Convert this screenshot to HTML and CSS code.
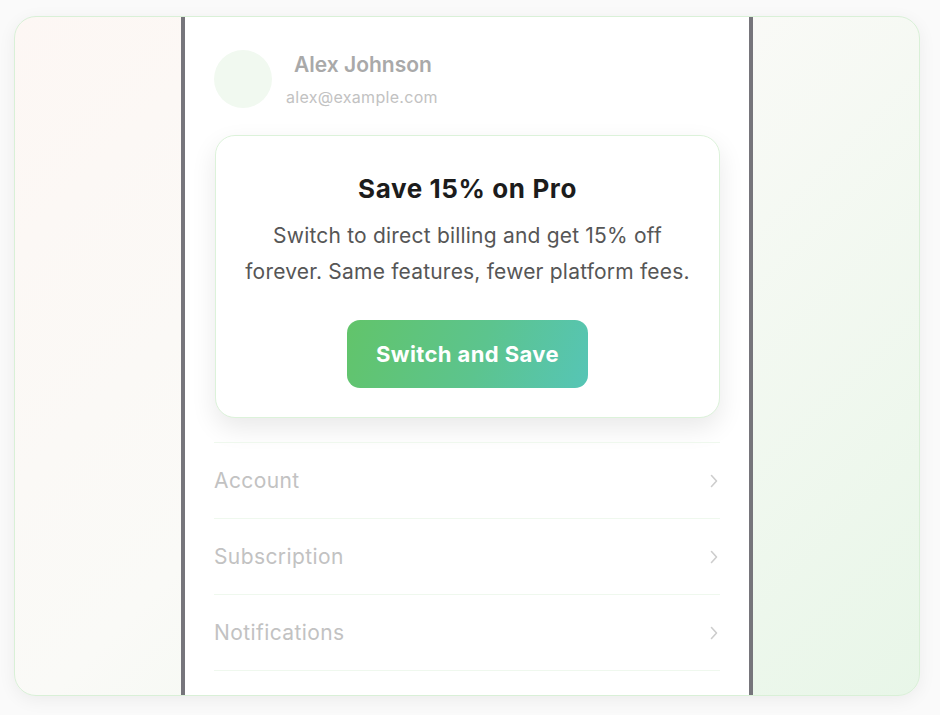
FILE: index.html
```html
<!DOCTYPE html>
<html lang="en">
<head>
<meta charset="utf-8">
<title>Save 15% on Pro</title>
<link rel="stylesheet" href="styles.css">
</head>
<body>
<div class="frame">
  <div class="phone">
    <div class="profile">
      <div class="avatar"></div>
      <div class="who">
        <div class="name">Alex Johnson</div>
        <div class="email">alex@example.com</div>
      </div>
    </div>
    <div class="promo">
      <h2 class="promo-title">Save 15% on Pro</h2>
      <p class="promo-text">Switch to direct billing and get 15% off forever. Same features, fewer platform fees.</p>
      <button class="promo-btn">Switch and Save</button>
    </div>
    <ul class="menu">
      <li class="menu-item"><span>Account</span><svg class="chev" width="8" height="14" viewBox="0 0 8 14"><path d="M1.5 1.5 L6.5 7 L1.5 12.5" fill="none" stroke="currentColor" stroke-width="1.6" stroke-linecap="round" stroke-linejoin="round"/></svg></li>
      <li class="menu-item"><span>Subscription</span><svg class="chev" width="8" height="14" viewBox="0 0 8 14"><path d="M1.5 1.5 L6.5 7 L1.5 12.5" fill="none" stroke="currentColor" stroke-width="1.6" stroke-linecap="round" stroke-linejoin="round"/></svg></li>
      <li class="menu-item"><span>Notifications</span><svg class="chev" width="8" height="14" viewBox="0 0 8 14"><path d="M1.5 1.5 L6.5 7 L1.5 12.5" fill="none" stroke="currentColor" stroke-width="1.6" stroke-linecap="round" stroke-linejoin="round"/></svg></li>
    </ul>
  </div>
</div>
</body>
</html>
```

FILE: styles.css
```css
* { box-sizing: border-box; }
html, body { height: 100%; }
body {
  margin: 0;
  background: #fafafa;
  font-family: Inter, "Liberation Sans", sans-serif;
  padding: 16px 20px 19px 14px;
}
.frame {
  width: 906px;
  height: 680px;
  border: 1px solid #d9f0d7;
  border-radius: 22px;
  background: linear-gradient(135deg, #fdf7f4 0%, #fafaf7 45%, #e8f6e8 100%);
  box-shadow: 0 4px 18px rgba(0, 0, 0, 0.06);
  overflow: hidden;
  display: flex;
  justify-content: center;
}
.phone {
  width: 572px;
  height: 760px;
  flex: none;
  background: #fff;
  border-left: 4px solid #76757b;
  border-right: 4px solid #76757b;
  padding: 33px 29px 0 29px;
}
.profile {
  display: flex;
  align-items: flex-start;
  gap: 14px;
  height: 85px;
}
.avatar {
  width: 58px;
  height: 58px;
  border-radius: 50%;
  background: #f1f9f0;
  flex: none;
}
.who { padding-top: 3px; }
.name {
  font-size: 21px;
  font-weight: 600;
  color: #a9a9a9;
  line-height: 24px;
  padding-left: 8px;
  letter-spacing: 0;
}
.email {
  margin-top: 10px;
  font-size: 16px;
  color: #c2c2c2;
  line-height: 20px;
  letter-spacing: 0.3px;
}
.promo {
  margin-left: 1px;
  width: 505px;
  height: 283px;
  border: 1px solid #dcf2da;
  border-radius: 20px;
  background: #fff;
  box-shadow: 0 10px 26px rgba(0, 0, 0, 0.09);
  text-align: center;
  padding-top: 37px;
}
.promo-title {
  margin: 0;
  font-size: 26px;
  font-weight: 700;
  color: #1c1c1c;
  line-height: 32px;
  letter-spacing: 0.6px;
}
.promo-text {
  margin: 13px auto 0;
  width: 460px;
  font-size: 21px;
  line-height: 36px;
  color: #565656;
  letter-spacing: 0.2px;
}
.promo-btn {
  margin-top: 30px;
  width: 241px;
  height: 68px;
  border: none;
  border-radius: 13px;
  background: linear-gradient(110deg, #62c46a 0%, #5cc48e 55%, #56c5b6 100%);
  color: #fff;
  font-family: inherit;
  font-size: 22px;
  font-weight: 700;
  letter-spacing: 0.4px;
}
.menu {
  list-style: none;
  margin: 24px 0 0;
  padding: 0;
  border-top: 1px solid #eff8ee;
}
.menu-item {
  height: 76px;
  display: flex;
  align-items: center;
  justify-content: space-between;
  border-bottom: 1px solid #eff8ee;
  font-size: 21px;
  color: #c2c2c2;
  letter-spacing: 0.4px;
  padding-right: 2px;
}
.chev { color: #cdcdcd; }
```
